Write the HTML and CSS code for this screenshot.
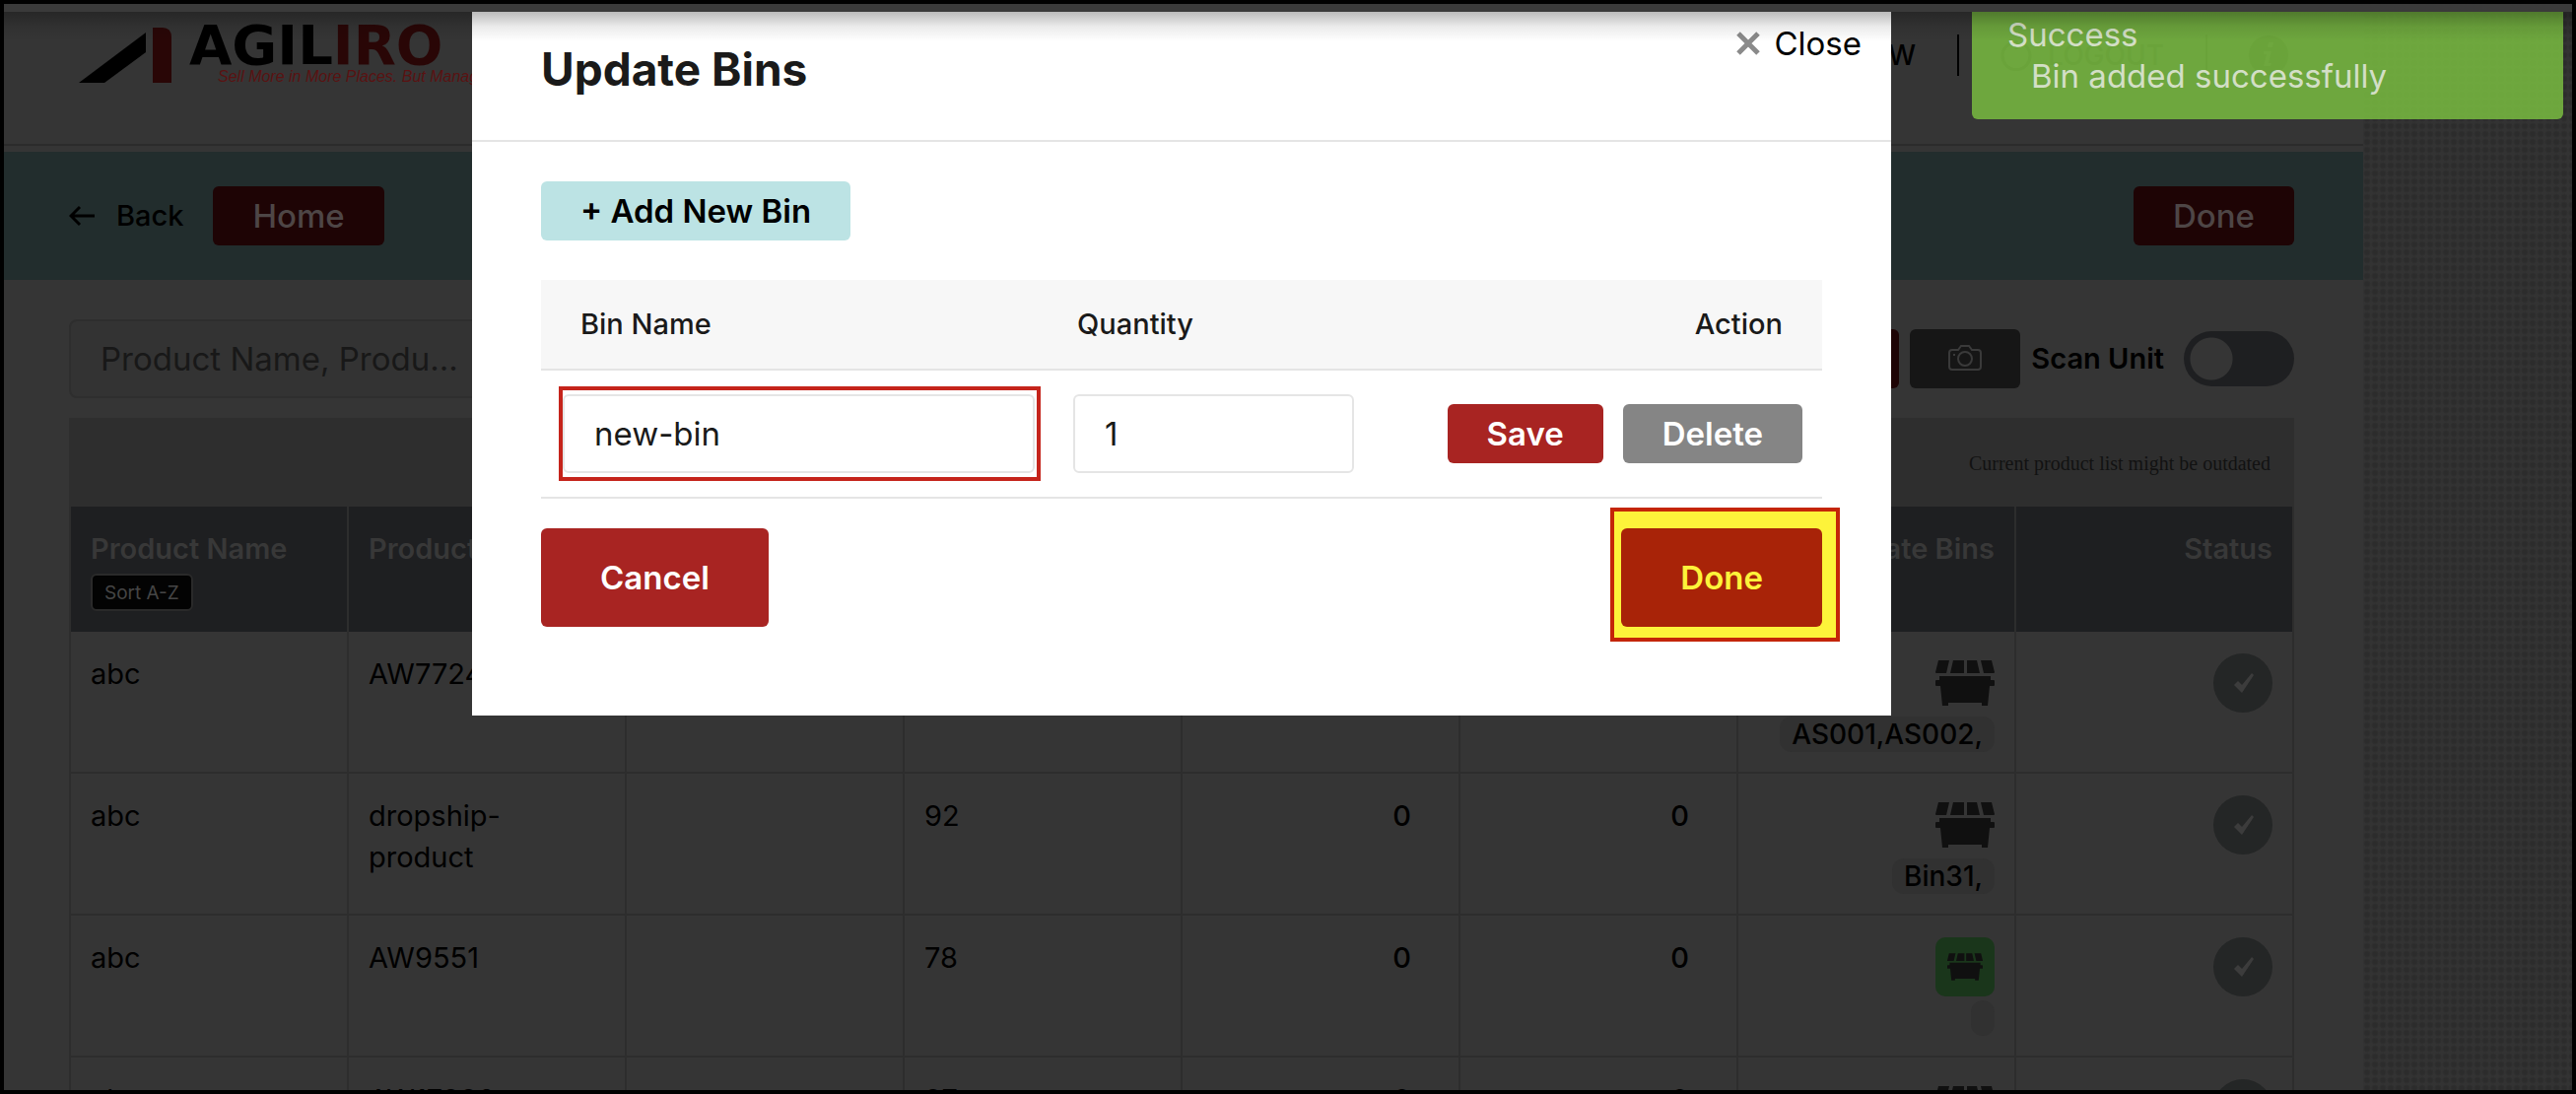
FILE: index.html
```html
<!DOCTYPE html>
<html lang="en">
<head>
  <meta charset="UTF-8">
  <meta name="viewport" content="width=device-width, initial-scale=1.0">
  <title>Update Bins</title>
  <link rel="stylesheet" href="styles.css">
</head>
<body>
  <svg class="sprite" width="0" height="0">
    <symbol id="bin" viewBox="0 0 60 48">
      <path d="M3 1h11l-3 13H1q-1 0-1-1zM18 1h11v13H15zM32 1h10l3 13H32zM46 1h11l3 12q0 1-1 1H49zM4 17h52v4h3q1 0 1 1v4q0 1-1 1h-4l-2 20h-6v-3H13v3H7L5 27H1q-1 0-1-1v-4q0-1 1-1h3z"/>
    </symbol>
    <symbol id="check" viewBox="0 0 60 60">
      <path d="M21 32l4-4 4 4 10-12 2 2-12 18z"/>
    </symbol>
  </svg>

  <div class="screen">
    <div class="page">
      <header class="topbar">
        <svg class="logo" width="420" height="80" viewBox="0 0 420 80">
          <path d="M0 62L68 11v20L26 62z" fill="#000"/>
          <path d="M75 6h10q9 0 9 10v46H75z" fill="#290606"/>
          <text class="logo-name" x="112" y="43">AGIL<tspan fill="#290606">IRO</tspan></text>
          <text class="logo-tag" x="141" y="61">Sell More in More Places. But Manage in</text>
        </svg>
        <nav class="topnav">
          <a href="#">NEW</a>
          <span class="divider"></span>
          <a href="#" class="logout">
            <svg width="32" height="32" viewBox="0 0 32 32" fill="none" stroke="currentColor" stroke-width="3"><path d="M10 4a14 14 0 1 0 12 0M16 1v9"/></svg>
            LOGOUT
          </a>
          <span class="divider"></span>
          <a href="#" class="info" aria-label="Info">
            <svg width="40" height="40" viewBox="0 0 40 40"><circle cx="20" cy="20" r="20"/><path d="M20 7h5l-1 5h-5zM15 16h8l-3 12h3l-1 3h-7l3-12h-3z" fill="#353535"/></svg>
          </a>
        </nav>
      </header>

      <div class="actionbar">
        <a href="#" class="back">
          <svg width="26" height="22" viewBox="0 0 26 22" fill="none" stroke="currentColor" stroke-width="3"><path d="M26 11H3M11 2l-9 9 9 9"/></svg>
          Back
        </a>
        <button class="dark-btn">Home</button>
        <button class="dark-btn push">Done</button>
      </div>

      <main class="content">
        <div class="tools">
          <input type="text" class="search" placeholder="Product Name, Produ..." aria-label="Search products">
          <button class="dark-btn scan" aria-label="Search"></button>
          <button class="camera" aria-label="Camera">
            <svg width="34" height="26" viewBox="0 0 34 26" fill="none" stroke="currentColor" stroke-width="2"><path d="M4 5h6l3-4h8l3 4h6q3 0 3 3v14q0 3-3 3H4q-3 0-3-3V8q0-3 3-3z"/><circle cx="17" cy="14" r="7"/><path d="M5 10h2"/></svg>
          </button>
          <label class="unit">Scan Unit <input type="checkbox" class="switch"></label>
        </div>

        <div class="notice">Current product list might be outdated</div>
        <table class="products">
          <thead>
            <tr>
              <th>Product Name<button class="sort">Sort A-Z</button></th>
              <th>Product SKU</th>
              <th></th>
              <th></th>
              <th></th>
              <th></th>
              <th class="right">Update Bins</th>
              <th class="right">Status</th>
            </tr>
          </thead>
          <tbody>
            <tr>
              <td>abc</td>
              <td>AW7724</td>
              <td></td>
              <td></td>
              <td class="count"></td>
              <td class="count"></td>
              <td class="right"><svg class="bin"><use href="#bin"/></svg><span class="chip">AS001,AS002,</span></td>
              <td class="right"><svg class="check"><use href="#check"/></svg></td>
            </tr>
            <tr>
              <td>abc</td>
              <td>dropship-product</td>
              <td></td>
              <td>92</td>
              <td class="count">0</td>
              <td class="count">0</td>
              <td class="right"><svg class="bin"><use href="#bin"/></svg><span class="chip">Bin31,</span></td>
              <td class="right"><svg class="check"><use href="#check"/></svg></td>
            </tr>
            <tr>
              <td>abc</td>
              <td>AW9551</td>
              <td></td>
              <td>78</td>
              <td class="count">0</td>
              <td class="count">0</td>
              <td class="right"><svg class="bin active"><use href="#bin"/></svg><span class="chip"></span></td>
              <td class="right"><svg class="check"><use href="#check"/></svg></td>
            </tr>
            <tr>
              <td>abc</td>
              <td>AW17998</td>
              <td></td>
              <td>97</td>
              <td class="count">0</td>
              <td class="count">0</td>
              <td class="right"><svg class="bin"><use href="#bin"/></svg><span class="chip"></span></td>
              <td class="right"><svg class="check"><use href="#check"/></svg></td>
            </tr>
          </tbody>
        </table>
      </main>
    </div>
    <div class="side"></div>

    <div class="overlay">
      <div class="modal" role="dialog" aria-labelledby="modal-title">
        <div class="modal-head">
          <h2 id="modal-title">Update Bins</h2>
          <button class="close">
            <svg width="24" height="24" viewBox="0 0 24 24" stroke="#8a8a8a" stroke-width="5"><path d="M2 2l20 20M22 2L2 22"/></svg>
            Close
          </button>
        </div>
        <div class="modal-body">
          <button class="btn add">+ Add New Bin</button>
          <table class="bins">
            <thead>
              <tr>
                <th class="col-name">Bin Name</th>
                <th class="col-qty">Quantity</th>
                <th class="col-action">Action</th>
              </tr>
            </thead>
            <tbody>
              <tr>
                <td class="cell-name"><div class="mark"><input type="text" value="new-bin" aria-label="Bin name"></div></td>
                <td class="cell-qty"><input type="text" value="1" aria-label="Quantity"></td>
                <td class="cell-action">
                  <div class="row-actions">
                    <button class="btn">Save</button>
                    <button class="btn grey">Delete</button>
                  </div>
                </td>
              </tr>
            </tbody>
          </table>
          <div class="modal-foot">
            <button class="btn big">Cancel</button>
            <div class="mark-done"><button class="btn big done">Done</button></div>
          </div>
        </div>
      </div>
    </div>

    <div class="toast" role="status">
      <div>Success</div>
      <div class="toast-text">Bin added successfully</div>
    </div>
    <div class="top-shade"></div>
  </div>
</body>
</html>
```
FILE: styles.css
```css
* {
  box-sizing: border-box;
}
body {
  margin: 0;
  font-family: Inter, 'Open Sans', sans-serif;
  font-size: 29px;
  line-height: 42px;
  color: #000;
  background: #000;
}
button, input {
  font-family: inherit;
}
a {
  color: inherit;
  text-decoration: none;
}
.sprite {
  position: absolute;
}
.screen {
  position: relative;
  display: flex;
  height: 100vh;
  overflow: hidden;
  border: 4px solid #000;
  background: #353535;
}
.page {
  flex: 1;
  min-width: 0;
}
.side {
  width: 212px;
  background-color: #333;
  background-image: radial-gradient(circle at 4px 4px, #2c2c2c 2px, transparent 4px);
  background-size: 8px 8px;
}

/* header */
.topbar {
  display: flex;
  justify-content: space-between;
  height: 144px;
  padding: 18px 76px 0;
  border-bottom: 2px solid #2b2b2b;
}
.logo-name {
  font-family: 'DejaVu Sans', sans-serif;
  font-size: 56px;
  font-weight: bold;
}
.logo-tag {
  font-family: 'Liberation Sans', sans-serif;
  font-size: 16px;
  font-style: italic;
  fill: #5a1212;
}
.topnav {
  display: flex;
  align-items: center;
  gap: 42px;
  height: 68px;
  font-size: 28px;
  font-weight: 500;
}
.divider {
  width: 2px;
  height: 42px;
  background: #000;
}
.logout {
  display: flex;
  align-items: center;
  gap: 16px;
}
.info {
  display: flex;
}

.actionbar {
  display: flex;
  align-items: center;
  height: 130px;
  margin-top: 6px;
  padding: 0 70px 0 66px;
  background: #222d2d;
}
.back {
  display: flex;
  align-items: center;
  gap: 22px;
  margin-right: 30px;
  font-weight: 500;
}
.dark-btn {
  height: 60px;
  padding: 0 40px;
  border: none;
  border-radius: 6px;
  background: #1e0405;
  color: #4e4646;
  font-size: 33px;
  font-weight: 500;
}
.push {
  margin-left: auto;
}

/* search row */
.content {
  padding: 40px 70px 0 66px;
}
.tools {
  display: flex;
  align-items: center;
  gap: 11px;
  margin-bottom: 20px;
}
.search {
  flex: 1;
  min-width: 0;
  height: 80px;
  padding: 0 30px;
  border: 2px solid #2e2e2e;
  border-radius: 8px;
  background: #333;
  color: #000;
  font-size: 33px;
}
.search::placeholder {
  color: #181818;
  opacity: 1;
}
.scan {
  width: 112px;
}
.camera {
  width: 112px;
  height: 60px;
  border: none;
  border-radius: 6px;
  background: #161616;
  color: #3a3a3a;
}
.unit {
  display: flex;
  align-items: center;
  gap: 20px;
  font-weight: 600;
}
.switch {
  appearance: none;
  width: 112px;
  height: 56px;
  margin: 0;
  border-radius: 28px;
  background: radial-gradient(circle at 28px 28px, #353535 21px, #1e1f21 22px);
}

/* product list */
.notice {
  padding: 25px 24px;
  height: 90px;
  background: #2e2e2e;
  color: #121212;
  font-family: 'Liberation Serif', serif;
  font-size: 20px;
  text-align: right;
}
.products {
  width: 100%;
  table-layout: fixed;
  border-collapse: separate;
  border-spacing: 0;
  border-left: 2px solid #2d2d2d;
}
.products th {
  height: 127px;
  padding: 22px 20px 0;
  border-right: 2px solid #2d2d2d;
  background: #1e1f21;
  color: #383838;
  font-weight: 600;
  text-align: left;
  vertical-align: top;
}
.sort {
  display: block;
  height: 38px;
  margin-top: 4px;
  padding: 0 12px;
  border: 2px solid #2a2a2a;
  border-radius: 6px;
  background: #030303;
  color: #454545;
  font-size: 19px;
}
.products td {
  height: 144px;
  padding: 22px 26px 0 20px;
  border-right: 2px solid #2d2d2d;
  border-bottom: 2px solid #2d2d2d;
  vertical-align: top;
}
.products .count {
  padding-right: 48px;
  font-weight: 500;
  text-align: right;
}
.products .right {
  padding-right: 20px;
  text-align: right;
}
.bin, .check {
  display: block;
  width: 60px;
  height: 60px;
  margin-left: auto;
}
.bin {
  fill: #101010;
}
.bin.active {
  padding: 12px;
  border-radius: 10px;
  background: #1a361b;
}
.check {
  border-radius: 50%;
  background: #242626;
  fill: #3c3c3c;
}
.chip {
  display: block;
  width: fit-content;
  height: 36px;
  margin: 4px 0 0 auto;
  padding: 0 12px;
  border-radius: 12px;
  background: #313131;
  font-size: 28px;
  font-weight: 500;
  line-height: 36px;
}

/* update bins dialog */
.overlay {
  position: absolute;
  inset: 8px 216px 0 0;
  display: flex;
  justify-content: center;
  align-items: flex-start;
}
.modal {
  width: 90%;
  max-width: 1440px;
  background: #fff;
  color: #1a1a1a;
}
.modal-head {
  display: flex;
  justify-content: space-between;
  align-items: flex-start;
  height: 132px;
  padding: 10px 30px 0 70px;
  border-bottom: 2px solid #e5e5e5;
}
.modal-head h2 {
  margin: 0;
  padding-top: 18px;
  font-size: 46px;
  line-height: 60px;
}
.close {
  display: flex;
  align-items: center;
  gap: 14px;
  padding: 0;
  border: none;
  background: none;
  color: #000;
  font-size: 33px;
  line-height: 44px;
}
.modal-body {
  padding: 40px 70px 90px;
}
.btn {
  height: 60px;
  padding: 0 40px;
  border: none;
  border-radius: 6px;
  background: #a82422;
  color: #fff;
  font-size: 33px;
  font-weight: 600;
}
.add {
  background: #bce3e4;
  color: #000;
}
.grey {
  background: #858585;
}
.bins {
  width: 100%;
  margin: 40px 0 30px;
  table-layout: fixed;
  border-spacing: 0;
}
.bins th {
  height: 92px;
  padding: 0 40px;
  border-bottom: 2px solid #e5e5e5;
  background: #f7f7f7;
  font-weight: 500;
  text-align: left;
}
.bins .col-name {
  width: 39%;
}
.bins .col-qty {
  width: 30%;
  padding-left: 37px;
}
.bins .col-action {
  text-align: right;
}
.bins td {
  height: 130px;
  padding: 0 20px;
  border-bottom: 2px solid #e5e5e5;
}
.bins input {
  display: block;
  width: 100%;
  height: 80px;
  padding: 0 30px;
  border: 2px solid #e5e5e5;
  border-radius: 6px;
  color: #1a1a1a;
  font-size: 33px;
}
.bins .cell-name {
  padding: 0 0 0 18px;
}
.mark {
  padding: 4px 2px 4px 0;
  border: 4px solid #c5241b;
}
.bins .cell-qty {
  padding: 0 72px 0 33px;
}
.row-actions {
  display: flex;
  justify-content: flex-end;
  gap: 20px;
}
.modal-foot {
  display: flex;
  justify-content: space-between;
  align-items: flex-start;
}
.big {
  height: 100px;
  padding: 0 60px;
}
/* highlight ring around the confirm button */
.mark-done {
  margin: -21px -18px -15px 0;
  padding: 17px 14px 11px 7px;
  border: 4px solid #c42508;
  background: #fdf33a;
}
.done {
  display: block;
  background: #a82308;
  color: #fdf33a;
}

.toast {
  position: absolute;
  top: 8px;
  right: 9px;
  width: 600px;
  padding: 2px 36px 23px;
  border-radius: 0 0 6px 6px;
  background: rgba(115, 177, 63, 0.92);
  color: #d3dfc6;
  font-size: 33px;
}
.toast-text {
  padding-left: 24px;
}
.top-shade {
  position: absolute;
  inset: 0 0 auto;
  height: 38px;
  border-top: 8px solid #3a3a3a;
  background: linear-gradient(rgba(0, 0, 0, 0.27), rgba(0, 0, 0, 0.08) 50%, transparent) padding-box;
}
```
